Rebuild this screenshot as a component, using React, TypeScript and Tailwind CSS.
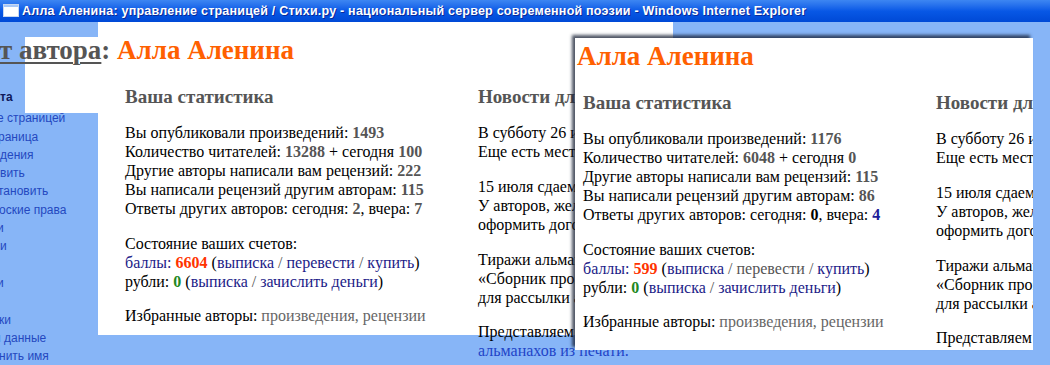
import React from 'react';

const serif = "font-['Liberation_Serif','Times_New_Roman',serif]";

function TitleBar() {
  return (
    <div className="h-[22px] shrink-0 flex items-center bg-gradient-to-b from-[#3d86f2] via-[#0858e6] to-[#0049d6] pl-[3px]">
      <svg width="16" height="14" viewBox="0 0 16 14" className="mr-[3px]">
        <rect x="0.5" y="0.5" width="15" height="12" fill="#ffffff" stroke="#c8d8f0" />
        <rect x="1" y="1" width="14" height="2" fill="#a8c8f8" />
      </svg>
      <span className="font-['Liberation_Sans',Arial,sans-serif] font-bold text-[12.5px] text-white tracking-[0.22px] whitespace-nowrap [text-shadow:1px_1px_0_#0a2a9a]">
        Алла Аленина: управление страницей / Стихи.ру - национальный сервер современной поэзии - Windows Internet Explorer
      </span>
    </div>
  );
}

const navItems: { text: string; cls?: string }[] = [
  { text: 'та', cls: 'font-bold text-[#0f1a5a] mb-[3px]' },
  { text: 'е страницей', cls: '-ml-[3px]' },
  { text: 'раница', cls: '-ml-[2px]' },
  { text: 'дения' },
  { text: 'вить' },
  { text: 'тановить', cls: '-ml-[2px]' },
  { text: 'оские права', cls: '-ml-[1px]' },
  { text: 'и', cls: '-ml-[3px]' },
  { text: 'и' },
  { text: '\u00a0' },
  { text: 'и', cls: '-ml-[3px]' },
  { text: '\u00a0' },
  { text: 'ки', cls: '-ml-[1px]' },
  { text: 'и данные', cls: '-ml-[6px]' },
  { text: 'нить имя', cls: '-ml-[1px]' },
];

function SideNav() {
  return (
    <div className="absolute left-0 top-[66px] flex flex-col font-['Liberation_Sans',Arial,sans-serif] text-[12px] leading-[18.3px] text-[#2448c0] whitespace-nowrap">
      {navItems.map((n, i) => (
        <span key={i} className={n.cls}>
          {n.text}
        </span>
      ))}
    </div>
  );
}

type Stats = {
  published: string;
  readers: string;
  today: string;
  received: string;
  written: string;
  ansToday: string;
  ansYesterday: string;
  balls: string;
  front?: boolean;
};

function StatsColumn({ s }: { s: Stats }) {
  const navy = 'text-[#1c1c88]';
  return (
    <div className="w-[353px] shrink-0">
      <h2 className="text-[19px] leading-[22px] font-bold text-[#555]">Ваша статистика</h2>
      <div className="mt-[15px] text-[16px] leading-[19px] text-black">
        <p>
          Вы опубликовали произведений: <b className="text-[#555]">{s.published}</b>
        </p>
        <p>
          Количество читателей: <b className="text-[#555]">{s.readers}</b> + сегодня{' '}
          <b className="text-[#555]">{s.today}</b>
        </p>
        <p>
          Другие авторы написали вам рецензий: <b className="text-[#555]">{s.received}</b>
        </p>
        <p>
          Вы написали рецензий другим авторам: <b className="text-[#555]">{s.written}</b>
        </p>
        <p>
          Ответы других авторов: сегодня:{' '}
          <b className={s.front ? 'text-black' : 'text-[#555]'}>{s.ansToday}</b>, вчера:{' '}
          <b className={s.front ? 'text-[#1c1c99]' : 'text-[#555]'}>{s.ansYesterday}</b>
        </p>

        <p className="mt-[16px]">Состояние ваших счетов:</p>
        <p>
          <span className={navy}>баллы:</span> <b className="text-[#ff3300]">{s.balls}</b> (
          <span className={navy}>выписка</span>
          <span className="text-[#555]"> / </span>
          <span className={s.front ? 'text-[#555]' : navy}>перевести</span>
          <span className="text-[#555]"> / </span>
          <span className={navy}>купить</span>)
        </p>
        <p>
          рубли: <b className="text-[#228822]">0</b> (<span className={navy}>выписка</span>
          <span className="text-[#555]"> / </span>
          <span className={navy}>зачислить деньги</span>)
        </p>

        <p className="mt-[15px]">
          Избранные авторы: <span className="text-[#666]">произведения, рецензии</span>
        </p>
      </div>
    </div>
  );
}

function NewsColumn() {
  return (
    <div className="whitespace-nowrap">
      <h2 className="text-[19px] leading-[22px] font-bold text-[#555]">Новости для авторов</h2>
      <div className="mt-[15px] text-[16px] leading-[19px] text-black">
        <p>В субботу 26 июля состоится встреча авторов.</p>
        <p>Еще есть места для желающих.</p>
        <p className="mt-[16px]">15 июля сдаем в печать новый альманах.</p>
        <p>У авторов, желающих участвовать, есть время</p>
        <p>оформить договор на публикацию.</p>
        <p className="mt-[16px]">Тиражи альманахов «Поэзия» и</p>
        <p>«Сборник прозы» уже отпечатаны</p>
        <p>для рассылки авторам.</p>
        <p className="mt-[15px]">Представляем новые выпуски</p>
        <p className="text-[#2244c8]">альманахов из печати.</p>
      </div>
    </div>
  );
}

function LeftPage() {
  return (
    <div className={`absolute left-[98px] top-0 w-[575px] h-[313px] bg-white ${serif}`}>
      <h1 className="-ml-[99px] pt-[13px] text-[27px] leading-[30px] font-bold whitespace-nowrap">
        <span className="text-[#555] underline underline-offset-[3px] decoration-[1.5px]">т автора</span>
        <span className="text-[#555]">:</span> <span className="text-[#ff6000]">Алла Аленина</span>
      </h1>
      <div className="mt-[21px] flex pl-[27px]">
        <StatsColumn
          s={{
            published: '1493',
            readers: '13288',
            today: '100',
            received: '222',
            written: '115',
            ansToday: '2',
            ansYesterday: '7',
            balls: '6604',
          }}
        />
        <NewsColumn />
      </div>
    </div>
  );
}

function FrontPanel() {
  return (
    <div
      className={`absolute left-[575px] top-[16px] w-[458px] h-[312px] bg-white overflow-hidden shadow-[-3px_-3px_3px_rgba(20,30,50,0.75)] ${serif}`}
    >
      <h1 className="pl-[2px] pt-[3px] text-[27px] leading-[30px] font-bold text-[#ff6000] whitespace-nowrap">
        Алла Аленина
      </h1>
      <div className="mt-[21px] flex pl-[8px]">
        <StatsColumn
          s={{
            published: '1176',
            readers: '6048',
            today: '0',
            received: '115',
            written: '86',
            ansToday: '0',
            ansYesterday: '4',
            balls: '599',
            front: true,
          }}
        />
        <NewsColumn />
      </div>
    </div>
  );
}

export default function App() {
  return (
    <div className="w-[1050px] h-[365px] overflow-hidden bg-[#87b5f7] flex flex-col">
      <TitleBar />
      <div className="relative flex-1">
        <SideNav />
        <div className="absolute left-[25px] top-[15px] w-[73px] h-[76px] bg-white" />
        <LeftPage />
        <FrontPanel />
      </div>
    </div>
  );
}
